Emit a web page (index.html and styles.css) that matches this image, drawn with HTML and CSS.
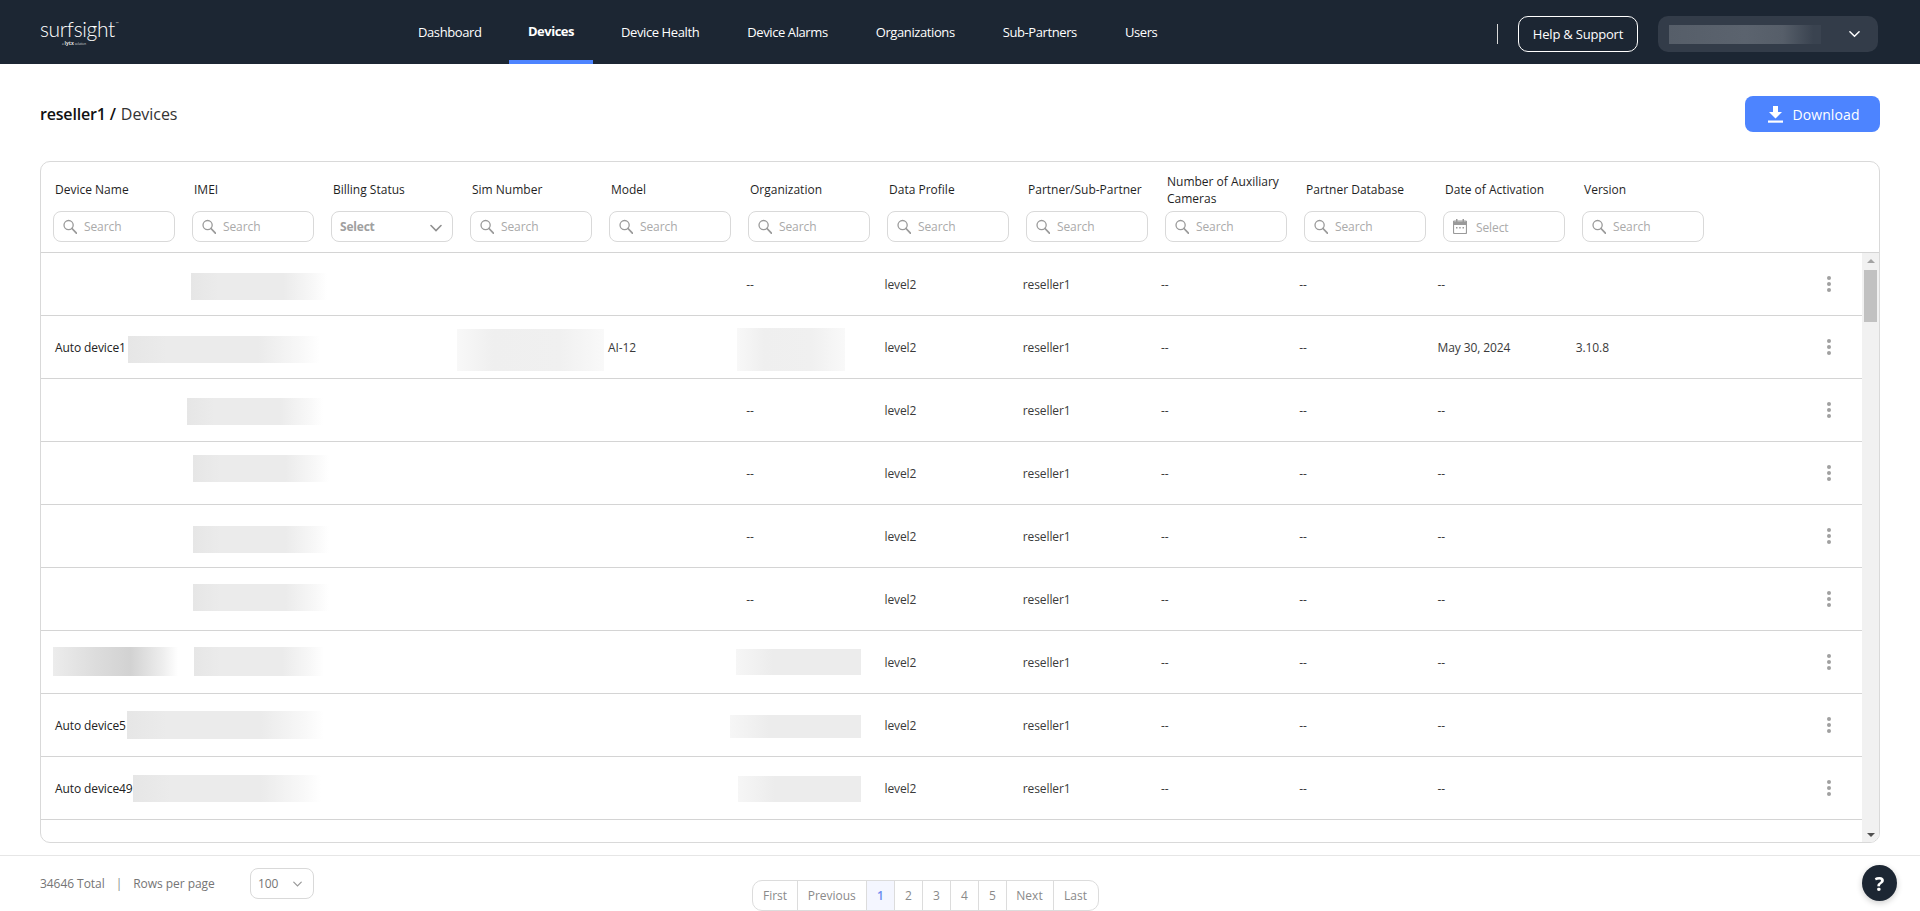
FILE: index.html
```html
<!DOCTYPE html>
<html lang="en">
<head>
<meta charset="utf-8">
<title>Devices</title>
<link rel="stylesheet" href="styles.css">
</head>
<body>
<svg class="defs" width="0" height="0" aria-hidden="true">
  <symbol id="i-search" viewBox="0 0 14 14"><circle cx="5.6" cy="5.6" r="4.6" fill="none" stroke="currentColor" stroke-width="1.3"/><path d="M9 9l4.4 4.6" fill="none" stroke="currentColor" stroke-width="1.8" stroke-linecap="round"/></symbol>
  <symbol id="i-chev" viewBox="0 0 12 8"><path d="M1 1.5l5 5 5-5" fill="none" stroke="currentColor" stroke-width="1.6" stroke-linecap="round"/></symbol>
</svg>
<header class="topbar">
  <div class="logo">
    <div class="logo-word">surfsight<sup class="logo-tm">™</sup></div>
    <div class="logo-sub">a <b>lytx</b> solution</div>
  </div>
  <nav class="nav">
    <a class="nav-item nav-dash">Dashboard</a>
    <a class="nav-item active">Devices</a>
    <a class="nav-item">Device Health</a>
    <a class="nav-item">Device Alarms</a>
    <a class="nav-item">Organizations</a>
    <a class="nav-item">Sub-Partners</a>
    <a class="nav-item">Users</a>
  </nav>
  <div class="top-right">
    <span class="divider"></span>
    <a class="help-btn">Help &amp; Support</a>
    <div class="user-menu">
      <span class="user-blur"></span>
      <svg class="user-chev"><use href="#i-chev"/></svg>
    </div>
  </div>
</header>

<main class="content">
  <div class="title-row">
    <h1 class="crumb"><b>reseller1 /</b> Devices</h1>
    <button class="download">
      <svg class="download-icon" viewBox="0 0 15 17"><path d="M5 0h5v6h4l-6.500 6.500L1 6h4z" fill="#fff"/><rect y="14.500" width="15" height="2.200" fill="#fff"/></svg>
      Download
    </button>
  </div>

  <section class="card">
    <div class="thead">
      <div class="th"><span class="th-label">Device Name</span><div class="field"><svg class="ic"><use href="#i-search"/></svg><span>Search</span></div></div>
      <div class="th"><span class="th-label">IMEI</span><div class="field"><svg class="ic"><use href="#i-search"/></svg><span>Search</span></div></div>
      <div class="th"><span class="th-label">Billing Status</span><div class="field select"><b>Select</b><svg class="sel-chev"><use href="#i-chev"/></svg></div></div>
      <div class="th"><span class="th-label">Sim Number</span><div class="field"><svg class="ic"><use href="#i-search"/></svg><span>Search</span></div></div>
      <div class="th"><span class="th-label">Model</span><div class="field"><svg class="ic"><use href="#i-search"/></svg><span>Search</span></div></div>
      <div class="th"><span class="th-label">Organization</span><div class="field"><svg class="ic"><use href="#i-search"/></svg><span>Search</span></div></div>
      <div class="th"><span class="th-label">Data Profile</span><div class="field"><svg class="ic"><use href="#i-search"/></svg><span>Search</span></div></div>
      <div class="th"><span class="th-label">Partner/Sub-Partner</span><div class="field"><svg class="ic"><use href="#i-search"/></svg><span>Search</span></div></div>
      <div class="th"><span class="th-label">Number of Auxiliary Cameras</span><div class="field"><svg class="ic"><use href="#i-search"/></svg><span>Search</span></div></div>
      <div class="th"><span class="th-label">Partner Database</span><div class="field"><svg class="ic"><use href="#i-search"/></svg><span>Search</span></div></div>
      <div class="th"><span class="th-label">Date of Activation</span><div class="field date">
        <svg class="ic" viewBox="0 0 14 15"><path d="M1.500 2h11a1 1 0 0 1 1 1v10.500a1 1 0 0 1-1 1h-11a1 1 0 0 1-1-1V3a1 1 0 0 1 1-1z" fill="none" stroke="currentColor" stroke-width="1.200"/><path d="M.5 2.500h13V6H.5zM3 0h1.500v3H3zM9.500 0H11v3H9.500z" fill="currentColor"/><path d="M3 8h1.500v1.400H3zM6.200 8h1.500v1.400H6.200zM9.500 8H11v1.400H9.500z" fill="currentColor"/></svg>
        <span>Select</span></div></div>
      <div class="th"><span class="th-label">Version</span><div class="field"><svg class="ic"><use href="#i-search"/></svg><span>Search</span></div></div>
    </div>

    <div class="tbody">
      <div class="rows">
        <div class="row">
          <span></span><span></span><span></span><span></span><span></span><span>--</span><span>level2</span><span>reseller1</span><span>--</span><span>--</span><span>--</span><span></span>
          <div class="actions"><i class="kebab"></i></div>
          <div class="mask m1a"></div>
        </div>
        <div class="row">
          <span class="name">Auto device1</span><span></span><span></span><span></span><span>AI-12</span><span></span><span>level2</span><span>reseller1</span><span>--</span><span>--</span><span>May 30, 2024</span><span>3.10.8</span>
          <div class="actions"><i class="kebab"></i></div>
          <div class="mask m2a"></div><div class="mask soft m2b"></div><div class="mask soft m2c"></div>
        </div>
        <div class="row">
          <span></span><span></span><span></span><span></span><span></span><span>--</span><span>level2</span><span>reseller1</span><span>--</span><span>--</span><span>--</span><span></span>
          <div class="actions"><i class="kebab"></i></div>
          <div class="mask m3a"></div>
        </div>
        <div class="row">
          <span></span><span></span><span></span><span></span><span></span><span>--</span><span>level2</span><span>reseller1</span><span>--</span><span>--</span><span>--</span><span></span>
          <div class="actions"><i class="kebab"></i></div>
          <div class="mask m4a"></div>
        </div>
        <div class="row">
          <span></span><span></span><span></span><span></span><span></span><span>--</span><span>level2</span><span>reseller1</span><span>--</span><span>--</span><span>--</span><span></span>
          <div class="actions"><i class="kebab"></i></div>
          <div class="mask m5a"></div>
        </div>
        <div class="row">
          <span></span><span></span><span></span><span></span><span></span><span>--</span><span>level2</span><span>reseller1</span><span>--</span><span>--</span><span>--</span><span></span>
          <div class="actions"><i class="kebab"></i></div>
          <div class="mask m6a"></div>
        </div>
        <div class="row">
          <span></span><span></span><span></span><span></span><span></span><span></span><span>level2</span><span>reseller1</span><span>--</span><span>--</span><span>--</span><span></span>
          <div class="actions"><i class="kebab"></i></div>
          <div class="mask dark m7a"></div><div class="mask m7b"></div><div class="mask rev m7c"></div>
        </div>
        <div class="row">
          <span class="name">Auto device5</span><span></span><span></span><span></span><span></span><span></span><span>level2</span><span>reseller1</span><span>--</span><span>--</span><span>--</span><span></span>
          <div class="actions"><i class="kebab"></i></div>
          <div class="mask m8a"></div><div class="mask rev m8b"></div>
        </div>
        <div class="row">
          <span class="name">Auto device49</span><span></span><span></span><span></span><span></span><span></span><span>level2</span><span>reseller1</span><span>--</span><span>--</span><span>--</span><span></span>
          <div class="actions"><i class="kebab"></i></div>
          <div class="mask m9a"></div><div class="mask rev m9b"></div>
        </div>
      </div>
      <div class="scrollbar">
        <span class="arrow up"></span>
        <span class="thumb"></span>
        <span class="arrow down"></span>
      </div>
    </div>
  </section>
</main>

<footer class="footer">
  <div class="totals">
    <span>34646 Total</span><span class="bar">|</span><span>Rows per page</span>
    <div class="per-page"><span>100</span><svg class="per-chev"><use href="#i-chev"/></svg></div>
  </div>
  <div class="pager">
    <a class="pg pg-first">First</a>
    <a class="pg pg-prev">Previous</a>
    <a class="pg pg-num current">1</a>
    <a class="pg pg-num">2</a>
    <a class="pg pg-num">3</a>
    <a class="pg pg-num">4</a>
    <a class="pg pg-num">5</a>
    <a class="pg pg-next">Next</a>
    <a class="pg pg-last">Last</a>
  </div>
</footer>
<button class="help-bubble">?</button>
</body>
</html>
```

FILE: styles.css
```css
* { box-sizing: border-box; }
html, body { margin: 0; padding: 0; height: 911px; overflow: hidden; background: #fff; }
body { font-family: "Open Sans", "Liberation Sans", sans-serif; color: #333; position: relative; }
.defs { position: absolute; }

/* top bar */
.topbar { height: 64px; background: #1c2633; display: flex; align-items: flex-start; color: #fff; }
.logo { width: 358px; padding: 17px 0 0 40px; line-height: 1; }
.logo-word { font-family: Lato, "Open Sans", sans-serif; font-weight: 300; font-size: 21px; line-height: 24px; letter-spacing: -.35px; color: #fff; white-space: nowrap; }
.logo-tm { font-size: 4px; vertical-align: 12px; line-height: 0; margin-left: 1px; }
.logo-sub { font-size: 3px; line-height: 5px; padding-left: 22px; color: #ddd; white-space: nowrap; }
.logo-sub b { font-size: 5px; }

.nav { display: flex; margin-left: 40px; }
.nav-item { display: block; height: 64px; padding: 0 20px; margin-right: 8px; font-size: 13px; line-height: 65px; color: #fff; white-space: nowrap; letter-spacing: -.4px; }
.nav-item.active { font-weight: 700; border-bottom: 4px solid #4d84ff; line-height: 63px; letter-spacing: -.5px; width: 84px; text-align: center; padding: 0; }
.nav-dash { width: 103px; padding-right: 0; }

.top-right { margin-left: auto; margin-right: 42px; display: flex; align-items: center; height: 68px; }
.divider { width: 1px; height: 20px; background: #d8d8d8; margin-right: 20px; }
.help-btn { display: flex; align-items: center; justify-content: center; width: 120px; height: 36px; border: 1px solid #fff; border-radius: 10px; font-size: 13px; letter-spacing: -.2px; color: #fff; margin-right: 20px; }
.user-menu { width: 220px; height: 36px; border-radius: 10px; background: #333c49; display: flex; align-items: center; padding: 0 18px 0 11px; justify-content: space-between; }
.user-blur { width: 152px; height: 19px; background: linear-gradient(to right, #565e69, #5b636e 50%, #565e69 75%, #3a4350 95%); }
.user-chev { width: 11px; height: 8px; color: #fff; margin-top: -1px; }

/* page */
.content { padding: 32px 40px 0; }
.title-row { display: flex; justify-content: space-between; align-items: center; height: 36px; margin-bottom: 29px; }
.crumb { margin: 0; font-size: 16px; font-weight: 400; color: #333; line-height: 36px; letter-spacing: -.05px; }
.crumb b { font-weight: 600; color: #111; margin-right: 1px; letter-spacing: -.18px; }
.download { width: 135px; height: 36px; border: 0; border-radius: 8px; background: #4d84ff; color: #fff; font: 400 14px "Open Sans", sans-serif; letter-spacing: .1px; display: flex; align-items: center; justify-content: center; gap: 9px; padding: 0 0 0 3px; }
.download-icon { width: 15px; height: 17px; }

/* table */
.card { height: 682px; border: 1px solid #d9d9d9; border-radius: 10px; overflow: hidden; }
.thead { display: grid; grid-template-columns: repeat(12, 122px); column-gap: 17px; padding: 11px 0 10px 12px; border-bottom: 1px solid #d4d4d4; height: 91px; }
.th { display: flex; flex-direction: column; }
.th-label { display: flex; align-items: center; height: 33px; padding-left: 2px; margin-bottom: 5px; font-size: 12px; font-weight: 500; line-height: 17px; color: #1f1f1f; white-space: normal; }
.th:nth-child(8) .th-label { white-space: nowrap; }
.field { height: 31px; border: 1px solid #d9d9d9; border-radius: 8px; display: flex; align-items: center; padding: 0 9px; gap: 7px; font-size: 12px; color: #aaa; }
.field span { font-size: 12px; letter-spacing: -.1px; }
.ic { width: 14px; height: 15px; color: #9a9a9a; flex: none; }
.select { justify-content: space-between; padding-left: 8px; }
.select b { font-weight: 700; color: #a0a0a0; letter-spacing: -.2px; }
.sel-chev { width: 12px; height: 8px; color: #909090; margin-right: 1px; margin-top: 3px; }
.date span { margin-top: 2px; margin-left: 2px; }

.tbody { display: flex; height: 589px; }
.rows { width: 1821px; overflow: hidden; flex: none; }
.row { position: relative; display: grid; grid-template-columns: repeat(12, 138.25px) 1fr; align-items: center; height: 63px; padding-left: 14px; border-bottom: 1px solid #d4d4d4; font-size: 12px; color: #3a3a3a; letter-spacing: -.1px; white-space: nowrap; }
.name { color: #222; }
.actions { display: flex; justify-content: flex-end; padding-right: 31px; }
.kebab { display: block; width: 4px; height: 4px; margin: 6px 0; border-radius: 50%; background: #a0a0a0; box-shadow: 0 -6px 0 #a0a0a0, 0 6px 0 #a0a0a0; }

/* redaction patches lying over the cells */
.mask { position: absolute; height: 27px; background: linear-gradient(to right, #e6e6e6, #ebebeb 20%, #ebebeb 68%, rgba(245,245,245,.7) 90%, rgba(255,255,255,0)); }
.mask.soft { background: linear-gradient(to right, #f8f8f8, #efefef 25%, #f0f0f0 70%, #f9f9f9); }
.mask.dark { background: linear-gradient(to right, #ececec, #dcdcdc 35%, #d2d2d2 62%, #eeeeee 88%, #fff); }
.mask.rev { background: linear-gradient(to right, #f6f6f6, #ececec 30%, #ececec); }
.m1a { left: 150px; top: 20px; width: 136px; }
.m2a { left: 87px; top: 20px; width: 192px; }
.m2b { left: 416px; top: 13px; width: 147px; height: 42px; }
.m2c { left: 696px; top: 12px; width: 108px; height: 43px; }
.m3a { left: 146px; top: 19px; width: 136px; }
.m4a { left: 152px; top: 13px; width: 136px; }
.m5a { left: 152px; top: 21px; width: 136px; }
.m6a { left: 152px; top: 16px; width: 136px; }
.m7a { left: 12px; top: 16px; width: 125px; height: 29px; }
.m7b { left: 153px; top: 16px; width: 130px; height: 29px; }
.m7c { left: 695px; top: 18px; width: 125px; height: 26px; }
.m8a { left: 86px; top: 17px; width: 197px; height: 28px; }
.m8b { left: 689px; top: 21px; width: 131px; height: 23px; }
.m9a { left: 92px; top: 18px; width: 188px; }
.m9b { left: 697px; top: 19px; width: 123px; height: 26px; }

.scrollbar { width: 17px; background: #f1f1f1; position: relative; flex: none; display: flex; flex-direction: column; align-items: center; }
.arrow { width: 0; height: 0; border-left: 4px solid transparent; border-right: 4px solid transparent; position: absolute; }
.arrow.up { top: 6px; border-bottom: 4px solid #a3a3a3; }
.arrow.down { bottom: 5px; border-top: 4px solid #505050; }
.thumb { width: 13px; height: 52px; margin-top: 17px; background: #c1c1c1; }

/* footer */
.footer { margin-top: 12px; border-top: 1px solid #e6e6e6; display: flex; align-items: flex-start; padding-left: 40px; }
.totals { display: flex; align-items: center; margin-top: 12px; height: 31px; width: 274px; font-size: 12px; color: #757575; white-space: nowrap; letter-spacing: -.05px; }
.bar { margin: 0 11px 0 11px; color: #888; }
.per-page { width: 64px; height: 31px; margin-left: auto; border: 1px solid #d9d9d9; border-radius: 8px; display: flex; align-items: center; padding-left: 7px; font-size: 12px; color: #757575; }
.per-chev { width: 9px; height: 6px; margin-left: 15px; color: #999; }
.pager { margin: 24px 0 0 438px; display: flex; height: 31px; border: 1px solid #dcdcdc; border-radius: 10px; overflow: hidden; font-size: 12px; color: #8a8a8a; }
.pg { display: flex; align-items: center; justify-content: center; border-right: 1px solid #dcdcdc; }
.pg:last-child { border-right: 0; }
.pg-first { width: 45px; }
.pg-prev { width: 68.500px; }
.pg-num { width: 28px; padding-left: 1px; }
.pg-next { width: 47px; }
.pg-last { width: 44px; }
.current { background: #f4f6ff; color: #6c8cf0; font-weight: 600; }

.help-bubble { position: fixed; left: 1862px; top: 865px; width: 35px; height: 36px; border: 0; border-radius: 50%; background: #1c2633; color: #fff; font: 700 20px "Open Sans", sans-serif; padding: 0; box-shadow: 0 2px 6px rgba(0,0,0,.2); }
```
